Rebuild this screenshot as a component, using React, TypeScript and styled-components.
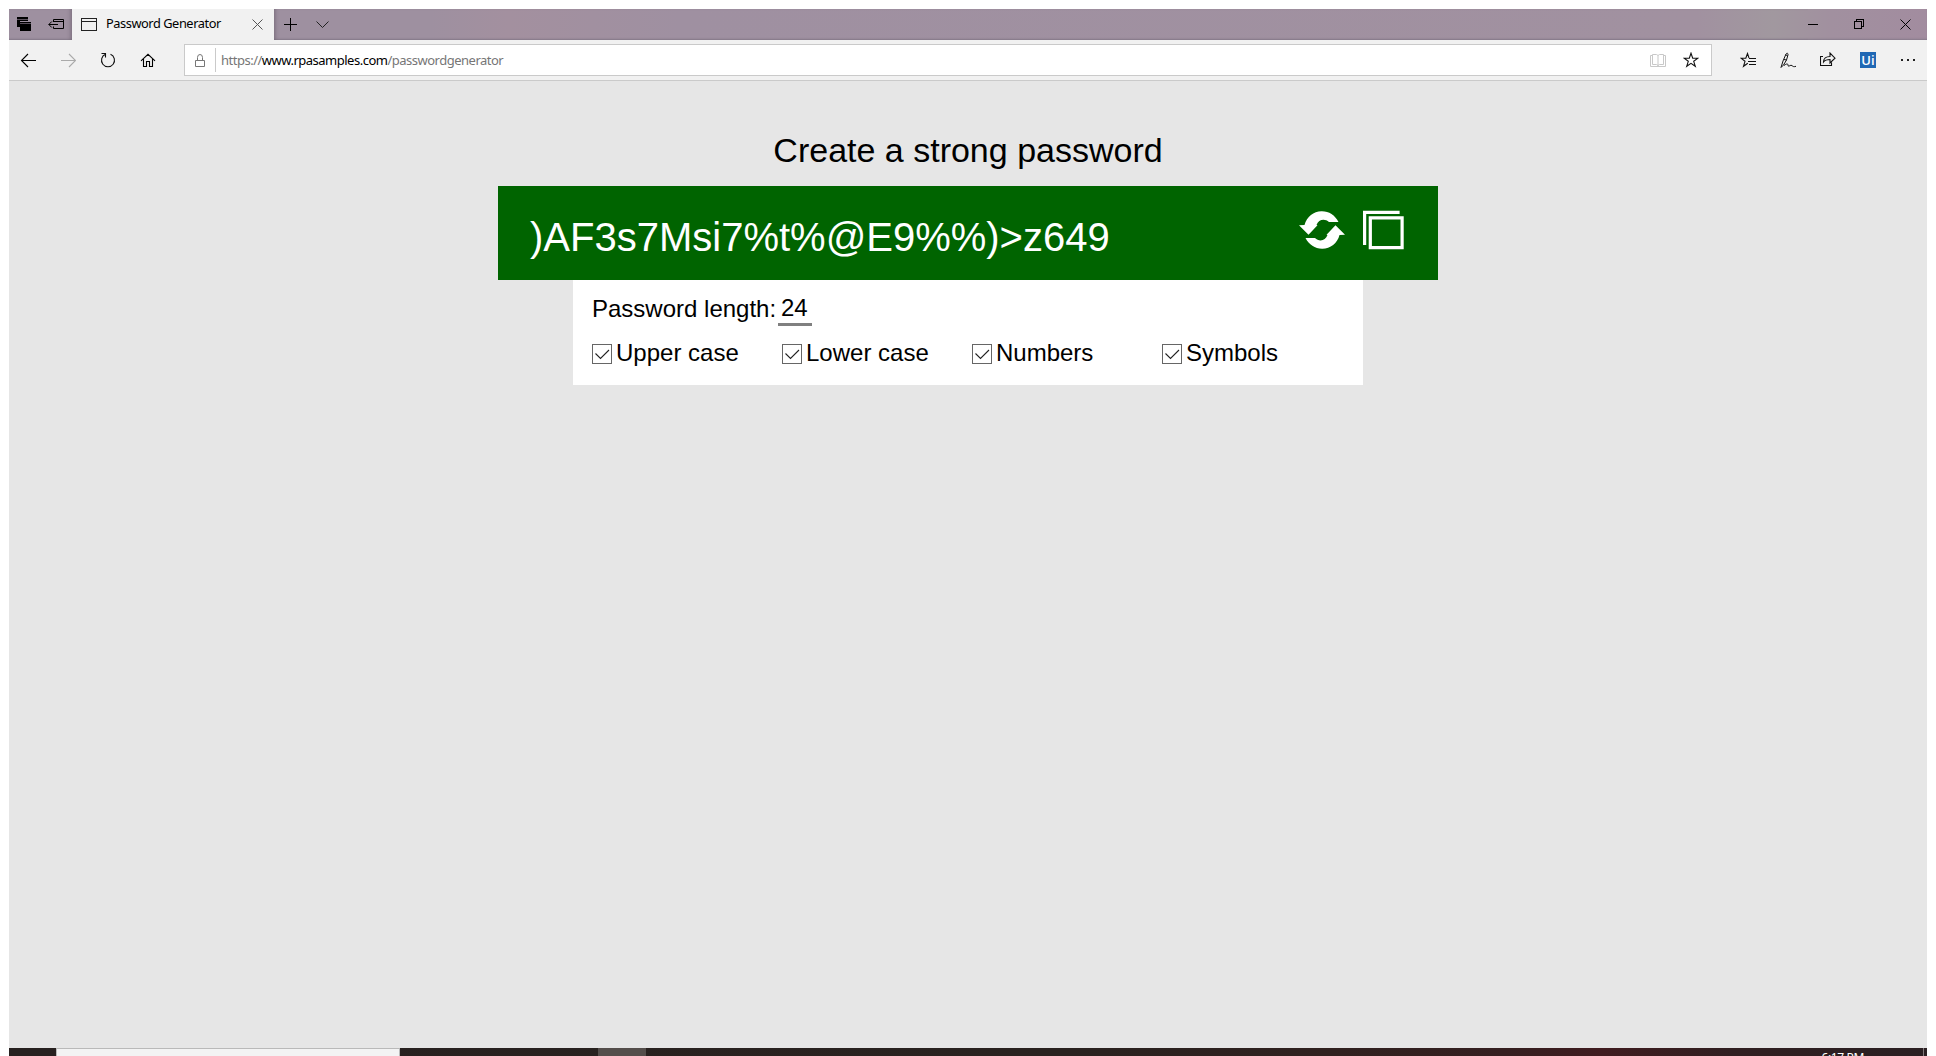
import React from 'react';
import styled, { createGlobalStyle } from 'styled-components';

const Global = createGlobalStyle`
  * { box-sizing: border-box; }
  body { margin: 0; background: #fff; overflow: hidden; }
`;

const Screen = styled.div`
  height: 1056px;
  padding: 9px 9px 0;
  display: flex;
  flex-direction: column;
  overflow: hidden;
  font-family: 'Noto Sans', 'Open Sans', sans-serif;
  background: #fff;
`;
const TitleBar = styled.header`
  height: 31px;
  display: flex;
  background: linear-gradient(90deg, #9e90a0 0, #9e90a0 22%, #a3909f 26%, #9f90a1 35%, #a191a0 88%, #a1989f 92%, #a1909f 95%, #a28c9f 100%);
  box-shadow: inset 0 -2px 2px -1px #85798a;
`;
const TabTools = styled.div`
  width: 63px;
  display: flex;
  align-items: center;
  padding-left: 8px;
  gap: 16px;
  box-shadow: inset -4px 0 4px -3px #756a78;
`;
const Tab = styled.div`
  width: 202px;
  display: flex;
  align-items: center;
  background: #f1f1f1;
  padding: 0 11px 0 9px;
`;
const TabTitle = styled.span`
  flex: 1;
  margin-left: 9px;
  font-size: 12.8px;
  letter-spacing: -0.44px;
  line-height: 27px;
  height: 29px;
  white-space: nowrap;
`;
const AfterTab = styled.div`
  flex: 1;
  display: flex;
  align-items: center;
  padding-left: 10px;
  gap: 19px;
  box-shadow: inset 4px 0 4px -3px #756a78;
`;
const WindowButtons = styled.div`
  display: flex;
  align-items: center;
  gap: 35px;
  padding-right: 16px;
`;
const Toolbar = styled.nav`
  height: 41px;
  display: flex;
  align-items: center;
  background: #f1f1f1;
  border-bottom: 1px solid #cacaca;
  padding-right: 11px;
`;
const NavIcons = styled.div`
  width: 175px;
  display: flex;
  gap: 24px;
  padding-left: 11px;
`;
const Address = styled.div`
  width: 1528px;
  height: 32px;
  display: flex;
  align-items: center;
  border: 1px solid #cacaca;
  background: #fff;
  padding: 0 12px 0 9px;
`;
const Divider = styled.i`
  width: 1px;
  height: 24px;
  margin: 0 5px 0 9px;
  background: #cacaca;
`;
const Url = styled.span`
  flex: 1;
  color: #767676;
  font-size: 13px;
  letter-spacing: -0.5px;
  line-height: 26px;
  b { font-weight: 400; color: #000; }
`;
const ReadIcon = styled.span`
  display: flex;
  margin-right: 17px;
`;
const Actions = styled.div`
  flex: 1;
  display: flex;
  justify-content: flex-end;
  align-items: center;
  gap: 24px;
`;
const UiBadge = styled.span`
  width: 16px;
  height: 16px;
  background: #2068b4;
  color: #fff;
  font: 600 13px/16px 'Open Sans', sans-serif;
  text-align: center;
`;
const Page = styled.main`
  height: 967px;
  display: flex;
  flex-direction: column;
  align-items: center;
  background: #e6e6e6;
  color: #000;
  font-family: 'Liberation Sans', Arial, sans-serif;
`;
const Heading = styled.h1`
  margin: 49px 0 15px;
  font-size: 34px;
  font-weight: 400;
  line-height: 41px;
`;
const PasswordBox = styled.section`
  width: 940px;
  height: 94px;
  display: flex;
  align-items: flex-start;
  background: #006400;
  color: #fff;
  padding-left: 32px;
`;
const Password = styled.span`
  width: 769px;
  padding-top: 27px;
  font-size: 40px;
  line-height: 48px;
`;
const IconButton = styled.button`
  border: 0;
  padding: 24px 0 0;
  margin-right: 16px;
  background: none;
  display: flex;
`;
const Options = styled.section`
  width: 790px;
  height: 105px;
  padding: 14px 19px 0;
  background: #fff;
  font-size: 24px;
`;
const LengthRow = styled.div`
  display: flex;
  height: 36px;
`;
const LengthLabel = styled.label`
  width: 186px;
  line-height: 30px;
  white-space: nowrap;
`;
const LengthValue = styled.span`
  width: 34px;
  height: 32px;
  line-height: 27px;
  padding-left: 3px;
  border-bottom: 3px solid #808080;
`;
const Checks = styled.div`
  display: grid;
  grid-template-columns: repeat(4, 190px);
  margin-top: 8px;
`;
const CheckItem = styled.label`
  display: flex;
  line-height: 30px;
  gap: 4px;
  white-space: nowrap;
`;
const CheckBox = styled.span`
  width: 20px;
  height: 20px;
  margin-top: 6px;
  border: 1px solid #666;
  display: flex;
`;
const Taskbar = styled.footer`
  height: 8px;
  display: flex;
  overflow: hidden;
  background: linear-gradient(90deg, #272120 0, #29221f 55%, #30211f 69%, #351f20 78%, #401c20 83%, #301f21 90%, #2a1f22 100%);
`;
const SearchBox = styled.div`
  width: 344px;
  margin-left: 47px;
  border: 1px solid #b9b9b9;
  border-bottom: 0;
  background: #f3f3f3;
`;
const ActiveTask = styled.div`
  width: 48px;
  margin-left: 198px;
  background: #544e4b;
`;
const Clock = styled.span`
  margin-left: auto;
  padding-right: 59px;
  padding-top: 3px;
  color: #fff;
  font-size: 12px;
  line-height: 14px;
  letter-spacing: -0.35px;
  height: 18px;
`;
const DesktopEdge = styled.i`
  width: 1px;
  margin-right: 3px;
  background: #827a7b;
`;
const Glyph = styled.svg`
  flex: none;
`;

type IconProps = { w: number; h: number; c?: string; s?: number; crisp?: boolean; children: React.ReactNode };
const Icon = ({ w, h, c = '#111', s = 1, crisp, children }: IconProps) => (
  <Glyph width={w} height={h} viewBox={`0 0 ${w} ${h}`} fill="none" stroke={c} strokeWidth={s}
    shapeRendering={crisp ? 'crispEdges' : 'auto'}>{children}</Glyph>
);

const options = ['Upper case', 'Lower case', 'Numbers', 'Symbols'];

export default function App() {
  return (
    <Screen>
      <Global />
      <TitleBar>
        <TabTools>
          <Icon w={15} h={15} c="none" crisp>
            <path d="M0 0h11v4H3v6H0z" fill="#000" />
            <path d="M0 2h11v1H0z" fill="#5c525d" />
            <path d="M3 5h11v9H3z" fill="#000" />
            <path d="M3 6h11v1H3z" fill="#5c525d" />
          </Icon>
          <Icon w={17} h={11} c="#000"><path d="M5.500 3V.500h10v9h-10V7.500M5.500 2.500h10M.800 5.500H10M3.800 2.500.800 5.500l3 3" /></Icon>
        </TabTools>
        <Tab>
          <Icon w={16} h={13} c="#222" crisp><path d="M.500.500h15v12H.500zM.500 3.500h15" /></Icon>
          <TabTitle>Password Generator</TabTitle>
          <Icon w={11} h={11} c="#555"><path d="m.500.500 10 10M10.500.500l-10 10" /></Icon>
        </Tab>
        <AfterTab>
          <Icon w={13} h={13} c="#000" crisp><path d="M6.500 0v13M0 6.500h13" /></Icon>
          <Icon w={13} h={7} c="#222"><path d="m.500.500 6 6 6-6" /></Icon>
        </AfterTab>
        <WindowButtons>
          <Icon w={11} h={11} c="#000" crisp><path d="M0 5.500h10" /></Icon>
          <Icon w={11} h={11} c="#000" crisp><path d="M.500 2.500h7v7h-7zM2.500 2V.500h7v7H8" /></Icon>
          <Icon w={11} h={11} c="#000"><path d="m.500.500 10 10M10.500.500l-10 10" /></Icon>
        </WindowButtons>
      </TitleBar>
      <Toolbar>
        <NavIcons>
          <Icon w={16} h={16} c="#000" s={1.1}><path d="M16 8.500H1.500M8 2 1.500 8.500 8 15" /></Icon>
          <Icon w={16} h={16} c="#aaa" s={1.1}><path d="M1 8.500h14.500M9 2l6.500 6.500L9 15" /></Icon>
          <Icon w={16} h={16} c="#111" s={1.1}><path d="M5.500 2.300A6.500 6.500 0 1 0 10.500 2.300M1.500 1.500H5.500V5.500" /></Icon>
          <Icon w={16} h={16} c="#000" s={1.1}><path d="m1 8.800 7-6.500 7 6.500M3.500 7v7.500h3V9.500h3v5h3V7" /></Icon>
        </NavIcons>
        <Address>
          <Icon w={12} h={15} c="#777"><path d="M1.500 7.500h9v6h-9zM3.500 7V4.500a2.500 3 0 0 1 5 0V7" /></Icon>
          <Divider />
          <Url>https://<b>www.rpasamples.com</b>/passwordgenerator</Url>
          <ReadIcon><Icon w={16} h={15} c="#c8c8c8"><path d="M2.500 1.500h4L8 2.500l1.500-1h4v10h-4L8 12.500l-1.500-1h-4zM8 2.500v11M2 2.500H.500v11h15v-11H14" /></Icon></ReadIcon>
          <Icon w={16} h={16} c="#111" s={1.1}><path d="m8 1.200 1.700 5h5.200l-4.200 3.100 1.600 5L8 11.300l-4.300 3 1.600-5L1.100 6.200h5.200z" /></Icon>
        </Address>
        <Actions>
          <Icon w={16} h={16} c="#111" s={1.1}><path d="M9 6 7.500 1.500 5.800 6.200H1l4 3.100-1.500 5 4.300-3.100M9 6.500h7M8 9.500h8M9 12.500h7" /></Icon>
          <Icon w={16} h={16} c="#111"><path d="M1 15.500 3 9 6 2c.8-1.300 2.400-.8 2 .8L6.500 8l-3 5L1 15.500M5.500 2.800l2 .9M6.500 8 4 7.500M4 13.500c3-2.500 4.500-1.500 4 .3 1 1.200 2.500-1.300 4-.3 1 1.200 2 1.500 4 .8" /></Icon>
          <Icon w={16} h={16} c="#111" s={1.1}><path d="M3 4.500H.500v9h11v-3M3.500 10C3.500 6.500 6 4.500 10 4.500V1l5 5.200-5 4.800V7.500C7 7.500 5 8 3.500 10z" /></Icon>
          <UiBadge>Ui</UiBadge>
          <Icon w={16} h={16} c="none"><path d="M1 7h2v2H1zM7 7h2v2H7zM13 7h2v2h-2z" fill="#222" /></Icon>
        </Actions>
      </Toolbar>
      <Page>
        <Heading>Create a strong password</Heading>
        <PasswordBox>
          <Password>{')AF3s7Msi7%t%@E9%%)>z649'}</Password>
          <IconButton aria-label="Generate">
            <Icon w={46} h={42} c="none">
              <path fill="#fff" d="M0 15.300 5.500 15C8 6.500 15 1 23 1.300c7 0 13 4 16.500 10.700H30c-4-3.800-10.500-3-12.500 3l1 .3L9.500 24.800z" />
              <path fill="#fff" d="m46 24.800-5.500.3C38.500 33.500 31 39 23 38.800c-7 0-13-4-16.500-10.700H16c4 3.800 10.500 3 12.500-3l-1-.3L36.500 15.300z" />
            </Icon>
          </IconButton>
          <IconButton aria-label="Copy">
            <Icon w={44} h={42} c="#fff" s={3.2}><path d="M3.600 35V2.300h35" /><path d="M9.300 7.900h31.800v29.800H9.300z" /></Icon>
          </IconButton>
        </PasswordBox>
        <Options>
          <LengthRow>
            <LengthLabel>Password length:</LengthLabel>
            <LengthValue>24</LengthValue>
          </LengthRow>
          <Checks>
            {options.map((name) => (
              <CheckItem key={name}>
                <CheckBox><Icon w={18} h={18} c="#222" s={1.1}><path d="m2.500 8.500 5 5 8.500-8.500" /></Icon></CheckBox>
                {name}
              </CheckItem>
            ))}
          </Checks>
        </Options>
      </Page>
      <Taskbar>
        <SearchBox />
        <ActiveTask />
        <Clock>6:17 PM</Clock>
        <DesktopEdge />
      </Taskbar>
    </Screen>
  );
}
